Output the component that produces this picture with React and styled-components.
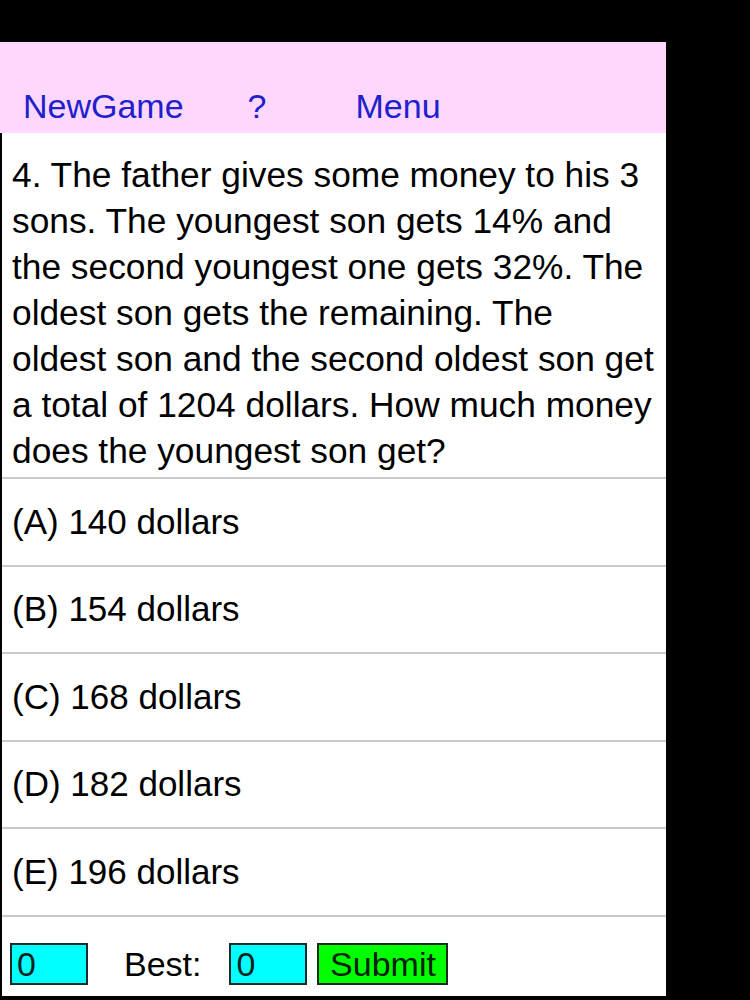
import styled, { createGlobalStyle } from "styled-components";

const GlobalStyle = createGlobalStyle`
  html, body {
    margin: 0;
    padding: 0;
    background: #000;
  }
  body {
    font-family: "Liberation Sans", Arial, sans-serif;
  }
`;

// line breaks kept as in the app
const question = [
  "4. The father gives some money to his 3",
  "sons. The youngest son gets 14% and",
  "the second youngest one gets 32%. The",
  "oldest son gets the remaining. The",
  "oldest son and the second oldest son get",
  "a total of 1204 dollars. How much money",
  "does the youngest son get?",
].join("\n");

const choices = [
  "(A) 140 dollars",
  "(B) 154 dollars",
  "(C) 168 dollars",
  "(D) 182 dollars",
  "(E) 196 dollars",
];

function App() {
  return (
    <>
      <GlobalStyle />
      <Screen>
        <Panel>
          <TopBar>
            <NavButton $gap={23}>NewGame</NavButton>
            <NavButton $gap={64}>?</NavButton>
            <NavButton $gap={89}>Menu</NavButton>
          </TopBar>
          <Body>
            <Question>{question}</Question>
            {choices.map((c) => (
              <Choice key={c}>{c}</Choice>
            ))}
            <ScoreBar>
              <ScoreBox>0</ScoreBox>
              <BestLabel>Best:</BestLabel>
              <ScoreBox>0</ScoreBox>
              <SubmitButton>Submit</SubmitButton>
            </ScoreBar>
          </Body>
        </Panel>
      </Screen>
    </>
  );
}

const Screen = styled.div`
  width: 750px;
  height: 1000px;
  padding-top: 42px;
  box-sizing: border-box;
  background: #000;
  overflow: hidden;
`;

const Panel = styled.div`
  width: 666px;
  display: flex;
  flex-direction: column;
`;

const TopBar = styled.div`
  height: 91px;
  box-sizing: border-box;
  background: #fdd7fd;
  display: flex;
  align-items: flex-end;
  padding-bottom: 3px;
`;

const NavButton = styled.button`
  border: none;
  background: none;
  padding: 0;
  margin-left: ${(p) => p.$gap}px;
  font-family: "Liberation Sans", Arial, sans-serif;
  font-size: 34px;
  line-height: 48px;
  color: #2020cc;
`;

const Body = styled.div`
  background: #fff;
  border-left: 2px solid #000;
  border-bottom: 2px solid #000;
  height: 865px;
  box-sizing: border-box;
  display: flex;
  flex-direction: column;
`;

const Question = styled.p`
  margin: 0;
  padding: 19px 10px 0 10px;
  height: 346px;
  box-sizing: border-box;
  white-space: pre-line;
  font-size: 35.3px;
  line-height: 46px;
  color: #000;
  border-bottom: 2px solid #c9c9c9;
`;

const Choice = styled.div`
  height: 87.5px;
  box-sizing: border-box;
  display: flex;
  align-items: center;
  padding: 0 10px;
  font-size: 35px;
  color: #000;
  border-bottom: 2px solid #c9c9c9;
`;

const ScoreBar = styled.div`
  flex: 1;
  display: flex;
  align-items: center;
  padding: 16px 0 0 8px;
`;

const ScoreBox = styled.div`
  width: 78px;
  height: 42px;
  box-sizing: border-box;
  border: 2px solid #1b2b2b;
  background: #00ffff;
  padding-left: 5px;
  font-size: 34px;
  line-height: 38px;
  color: #0d2020;
  margin-right: 10px;
`;

const BestLabel = styled.span`
  font-size: 34px;
  color: #000;
  margin: 0 28px 0 26px;
`;

const SubmitButton = styled.button`
  width: 131px;
  height: 42px;
  box-sizing: border-box;
  border: 2px solid #1a2a1a;
  background: #00ff00;
  padding: 0;
  font-family: "Liberation Sans", Arial, sans-serif;
  font-size: 34px;
  line-height: 38px;
  color: #0a200a;
`;

export default App;
